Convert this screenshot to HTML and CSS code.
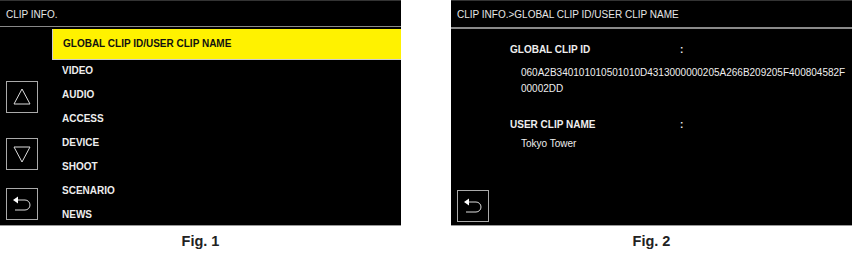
FILE: index.html
```html
<!DOCTYPE html>
<html lang="en">
<head>
    <meta charset="UTF-8">
    <title>Clip Info</title>
    <link rel="stylesheet" href="styles.css">
</head>
<body>
    <section class="figures">
        <section class="figure">
            <section class="screen">
                <div class="header">CLIP INFO.</div>
                <div class="screen-body">
                    <div class="side">
                        <div class="btn btn-up">
                            <svg width="22" height="22" viewBox="0 0 22 22"><polygon points="11,3 3,18 19,18" fill="none" stroke="#ddd" stroke-width="1"/></svg>
                        </div>
                        <div class="btn btn-down">
                            <svg width="22" height="22" viewBox="0 0 22 22"><polygon points="3,4 19,4 11,19" fill="none" stroke="#ddd" stroke-width="1"/></svg>
                        </div>
                        <div class="btn btn-back">
                            <svg width="24" height="20" viewBox="0 0 24 20"><polygon points="3,6 8,2.5 8,9.5" fill="#fff"/><path d="M8 6 H15 A5 5 0 0 1 15 16 H5" fill="none" stroke="#ddd" stroke-width="1"/></svg>
                        </div>
                    </div>
                    <ul class="menu">
                        <li class="selected">GLOBAL CLIP ID/USER CLIP NAME</li>
                        <li>VIDEO</li>
                        <li>AUDIO</li>
                        <li>ACCESS</li>
                        <li>DEVICE</li>
                        <li>SHOOT</li>
                        <li>SCENARIO</li>
                        <li>NEWS</li>
                    </ul>
                </div>
            </section>
            <p class="caption">Fig. 1</p>
        </section>
        <section class="figure">
            <section class="screen">
                <div class="header header-thick">CLIP INFO.&gt;GLOBAL CLIP ID/USER CLIP NAME</div>
                <div class="detail">
                    <div class="field">
                        <span class="label">GLOBAL CLIP ID</span>
                        <span class="colon">:</span>
                    </div>
                    <div class="value">060A2B340101010501010D4313000000205A266B209205F400804582F<br>00002DD</div>
                    <div class="field field-gap">
                        <span class="label">USER CLIP NAME</span>
                        <span class="colon">:</span>
                    </div>
                    <div class="value value-name">Tokyo Tower</div>
                </div>
                <div class="detail-foot">
                    <div class="btn btn-back">
                        <svg width="24" height="20" viewBox="0 0 24 20"><polygon points="3,6 8,2.5 8,9.5" fill="#fff"/><path d="M8 6 H15 A5 5 0 0 1 15 16 H5" fill="none" stroke="#ddd" stroke-width="1"/></svg>
                    </div>
                </div>
            </section>
            <p class="caption">Fig. 2</p>
        </section>
    </section>
</body>
</html>
```

FILE: styles.css
```css
body {
    font-family: "Liberation Sans", Arial, sans-serif;
    margin: 0;
    padding: 0;
    background-color: #fff;
}

.figures {
    display: flex;
    flex-direction: row;
    gap: 50px;
}

.figure {
    width: 401px;
}

.screen {
    height: 226px;
    background-color: #000;
    color: #eee;
    display: flex;
    flex-direction: column;
    border-bottom: 1px solid #999;
    box-sizing: border-box;
}

.header {
    height: 27px;
    line-height: 28px;
    padding-left: 6px;
    font-size: 10px;
    color: #e6e6e6;
    border-top: 1px solid #333;
    border-bottom: 1px solid #888;
    box-sizing: border-box;
}

.header-thick {
    height: 29px;
    border-bottom: 2px solid #8a8a8a;
}

.screen-body {
    flex: 1;
    display: flex;
    flex-direction: row;
}

.side {
    width: 52px;
    display: flex;
    flex-direction: column;
    padding-top: 54px;
}

.btn {
    width: 32px;
    height: 32px;
    margin-left: 6px;
    border: 1px solid #aaa;
    box-sizing: border-box;
    display: flex;
    align-items: center;
    justify-content: center;
}

.btn-down {
    margin-top: 25px;
}

.btn-back {
    margin-top: 18px;
}

.menu {
    flex: 1;
    list-style: none;
    margin: 0;
    padding: 0;
}

.menu li {
    height: 24px;
    line-height: 23px;
    padding-left: 10px;
    font-size: 10px;
    font-weight: bold;
    color: #eee;
}

.menu li.selected {
    height: 30px;
    line-height: 29px;
    margin-top: 2px;
    margin-bottom: -1px;
    background-color: #fff200;
    color: #111;
    border-left: 1px solid #ccc;
    border-bottom: 1px solid #ccc;
}

.detail {
    padding: 11px 0 0 59px;
    font-size: 10px;
    flex: 1;
}

.field {
    display: flex;
    height: 20px;
    line-height: 20px;
    font-weight: bold;
}

.field-gap {
    margin-top: 18px;
}

.label {
    width: 170px;
}

.value {
    margin-top: 5px;
    padding-left: 11px;
    line-height: 16px;
}

.value-name {
    margin-top: 1px;
}

.detail-foot {
    padding-bottom: 3px;
}

.caption {
    margin: 7px 0 0;
    text-align: center;
    font-size: 14.5px;
    font-weight: bold;
    color: #222;
}
```
